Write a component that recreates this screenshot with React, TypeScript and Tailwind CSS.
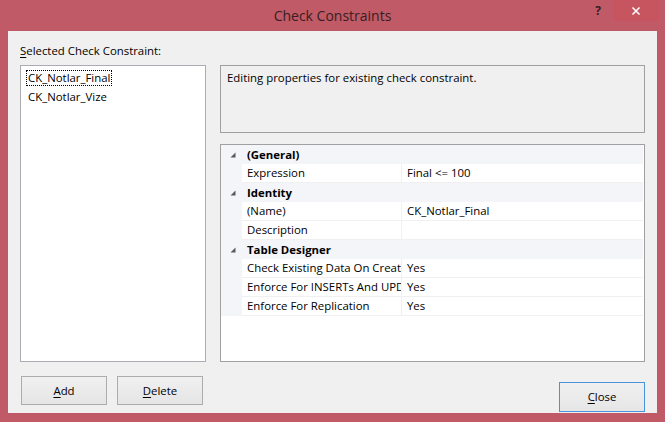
import * as React from "react";

const font = { fontFamily: '"Open Sans", "Noto Sans", sans-serif' };

type Row =
	| { kind: "cat"; label: string }
	| { kind: "prop"; name: string; value: string };

const rows: Row[] = [
	{ kind: "cat", label: "(General)" },
	{ kind: "prop", name: "Expression", value: "Final <= 100" },
	{ kind: "cat", label: "Identity" },
	{ kind: "prop", name: "(Name)", value: "CK_Notlar_Final" },
	{ kind: "prop", name: "Description", value: "" },
	{ kind: "cat", label: "Table Designer" },
	{ kind: "prop", name: "Check Existing Data On Creation Or Re-Enabling", value: "Yes" },
	{ kind: "prop", name: "Enforce For INSERTs And UPDATEs", value: "Yes" },
	{ kind: "prop", name: "Enforce For Replication", value: "Yes" },
];

function Expander() {
	return (
		<svg width="6" height="6" viewBox="0 0 6 6" className="block">
			<polygon points="5.5,0.5 5.5,5.5 0.5,5.5" fill="#595959" />
		</svg>
	);
}

function DialogButton({
	children,
	primary = false,
}: {
	children: React.ReactNode;
	primary?: boolean;
}) {
	return (
		<button
			type="button"
			className={
				primary
					? "w-[86px] h-[30px] border border-[#4a93dc] bg-gradient-to-b from-[#f0f0f0] to-[#e6e6e6] text-[11.4px] text-black"
					: "w-[86px] h-[29px] border border-[#acacac] bg-gradient-to-b from-[#f0f0f0] to-[#e5e5e5] text-[11.4px] text-black"
			}
		>
			{children}
		</button>
	);
}

export default function App() {
	return (
		<div
			className="w-[665px] h-[422px] bg-[#bf5a66] flex flex-col select-none"
			style={font}
		>
			{/* title bar */}
			<div className="h-[31px] flex items-start">
				<div className="flex-1 text-center text-[14px] leading-[31px] text-[#3a1d22] pl-[82px]">
					Check Constraints
				</div>
				<div className="w-[30px] h-[21px] flex items-center justify-center text-[12px] font-bold text-[#3a1d22]">
					?
				</div>
				<div className="w-[46px] h-[21px] mr-[6px] bg-[#c65560] flex items-center justify-center">
					<svg width="10" height="10" viewBox="0 0 10 10">
						<path d="M1.5 1.5 L8.5 8.5 M8.5 1.5 L1.5 8.5" stroke="#ffffff" strokeWidth="1.5" />
					</svg>
				</div>
			</div>

			{/* client area */}
			<div className="mx-[8px] h-[382px] bg-[#f0f0f0] px-[12px] pt-[11px] flex flex-col text-[11.4px] text-black">
				<div className="h-[18px] leading-[18px] mb-[5px]">
					<span className="underline underline-offset-2">S</span>elected Check Constraint:
				</div>

				<div className="h-[297px] flex gap-[14px]">
					<div className="w-[186px] h-full bg-white border border-[#abadb3] pt-[2px] pl-[5px]">
						<div className="h-[19px] flex items-center">
							<span className="border border-dotted border-black px-[1px] leading-[14px]">
								CK_Notlar_Final
							</span>
						</div>
						<div className="h-[19px] flex items-center pl-[2px]">CK_Notlar_Vize</div>
					</div>

					<div className="w-[425px] flex flex-col">
						<div className="h-[68px] border border-[#a0a0a0] bg-[#f0f0f0] px-[6px] pt-[3px] leading-[18px]">
							Editing properties for existing check constraint.
						</div>
						<div className="mt-[11px] h-[218px] border border-[#a0a0a0] bg-white flex flex-col pr-[1px]">
							{rows.map((row, i) =>
								row.kind === "cat" ? (
									<div key={i} className="h-[19px] flex items-center bg-[#f3f5f9]">
										<div className="w-[21px] flex justify-end pr-[6px]">
											<Expander />
										</div>
										<div className="pl-[5px] font-bold">{row.label}</div>
									</div>
								) : (
									<div key={i} className="h-[19px] flex">
										<div className="w-[21px] bg-[#f3f5f9]" />
										<div className="flex-1 flex border-b border-[#f0f0f0]">
											<div className="w-[160px] pl-[5px] leading-[18px] whitespace-nowrap overflow-hidden border-r border-[#f0f0f0]">
												{row.name}
											</div>
											<div className="flex-1 pl-[5px] leading-[18px] whitespace-nowrap">
												{row.value}
											</div>
										</div>
									</div>
								),
							)}
						</div>
					</div>
				</div>

				<div className="mt-[14px] flex items-start pl-[1px]">
					<DialogButton>
						<span className="underline underline-offset-2">A</span>dd
					</DialogButton>
					<div className="ml-[10px]">
						<DialogButton>
							<span className="underline underline-offset-2">D</span>elete
						</DialogButton>
					</div>
					<div className="ml-auto mt-[6px]">
						<DialogButton primary>
							<span className="underline underline-offset-2">C</span>lose
						</DialogButton>
					</div>
				</div>
			</div>
		</div>
	);
}
